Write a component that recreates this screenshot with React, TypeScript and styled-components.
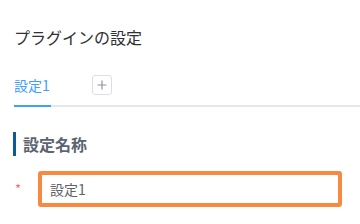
import React from "react";
import styled, { createGlobalStyle } from "styled-components";

const Global = createGlobalStyle`
  html, body { margin: 0; padding: 0; background: #fff; }
  body { font-family: "Noto Sans CJK JP", "Noto Sans", sans-serif; }
`;

const Page = styled.div`
  padding: 25px 0 0 14px;
  width: 346px;
  box-sizing: border-box;
`;

const Title = styled.div`
  font-size: 16px;
  line-height: 24px;
  color: #303133;
  height: 24px;
`;

const TabHeader = styled.div`
  margin-top: 16px;
  display: flex;
  align-items: center;
  height: 40px;
  border-bottom: 2px solid #e4e7ed;
  width: 346px;
  box-sizing: content-box;
  position: relative;
`;

const Tab = styled.div<{ $active?: boolean }>`
  position: relative;
  height: 40px;
  line-height: 40px;
  font-size: 14px;
  color: ${(p) => (p.$active ? "#409eff" : "#303133")};
  padding-right: 1px;
  &::after {
    content: "";
    position: absolute;
    left: 0;
    right: 0;
    bottom: -2px;
    height: 2px;
    background: ${(p) => (p.$active ? "#409eff" : "transparent")};
  }
`;

const AddButton = styled.div`
  margin-left: 41px;
  width: 20px;
  height: 20px;
  box-sizing: border-box;
  border: 1px solid #dcdfe6;
  border-radius: 3px;
  display: flex;
  align-items: center;
  justify-content: center;
`;

const Section = styled.div`
  margin-top: 25px;
  display: flex;
  align-items: center;
  height: 24px;
`;

const Bar = styled.div`
  width: 3px;
  height: 24px;
  background: #0a5d94;
  margin-left: -1px;
`;

const SectionTitle = styled.div`
  margin-left: 7px;
  font-size: 16px;
  font-weight: 700;
  color: #5c6470;
  line-height: 24px;
`;

const Row = styled.div`
  margin-top: 15px;
  display: flex;
  align-items: flex-start;
`;

const Required = styled.div`
  width: 24px;
  color: #f56c6c;
  font-size: 13px;
  line-height: 13px;
  padding-top: 11px;
  padding-left: 1px;
  box-sizing: border-box;
`;

const InputBox = styled.div`
  width: 304px;
  height: 36px;
  box-sizing: border-box;
  border: 4px solid #f98940;
  border-radius: 3px;
  padding-left: 8px;
  display: flex;
  align-items: center;
  font-size: 14px;
  color: #606266;
`;

export default function App() {
  return (
    <>
      <Global />
      <Page>
        <Title>プラグインの設定</Title>
        <TabHeader>
          <Tab $active>設定1</Tab>
          <AddButton>
            <svg width="10" height="10" viewBox="0 0 10 10">
              <path d="M5 0.5V9.5M0.5 5H9.5" stroke="#909399" strokeWidth="1.2" />
            </svg>
          </AddButton>
        </TabHeader>
        <Section>
          <Bar />
          <SectionTitle>設定名称</SectionTitle>
        </Section>
        <Row>
          <Required>*</Required>
          <InputBox>設定1</InputBox>
        </Row>
      </Page>
    </>
  );
}
